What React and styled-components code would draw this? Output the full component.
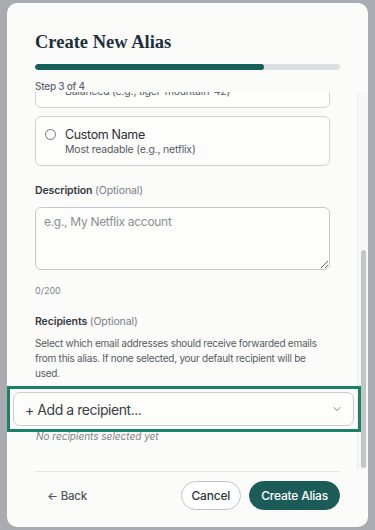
import React from 'react'
import styled, { createGlobalStyle } from 'styled-components'

const GlobalStyle = createGlobalStyle`
  html, body {
    margin: 0;
    padding: 0;
    background: #a8abb0;
  }
  body {
    font-family: Inter, "Noto Sans", sans-serif;
    -webkit-font-smoothing: antialiased;
  }
`

const Page = styled.div`
  padding: 3px 7px;
  height: 530px;
  box-sizing: border-box;
`

const Modal = styled.div`
  width: 361px;
  height: 524px;
  background: #fbfbfa;
  border-radius: 10px;
  display: flex;
  flex-direction: column;
  overflow: hidden;
`

const Header = styled.div`
  padding: 27px 28px 0;
`

const Title = styled.h1`
  margin: 0;
  font-family: "Liberation Serif", "DejaVu Serif", serif;
  font-weight: 700;
  font-size: 18.5px;
  line-height: 24px;
  color: #22303a;
`

const Track = styled.div`
  margin-top: 10px;
  height: 6px;
  border-radius: 3px;
  background: #dcdfe1;
  overflow: hidden;
`

const Fill = styled.div`
  height: 100%;
  background: #175f59;
  border-radius: 3px;
`

const StepText = styled.div`
  margin-top: 11px;
  font-size: 10px;
  line-height: 11px;
  font-weight: 500;
  letter-spacing: -0.25px;
  color: #5f6670;
`

const Viewport = styled.div`
  position: relative;
  flex: 1;
  overflow: hidden;
`

const Content = styled.div`
  margin-top: -34px;
  padding: 0 38px 0 28px;
`

const ScrollTrack = styled.div`
  position: absolute;
  top: 1px;
  bottom: 1px;
  right: 0;
  width: 10px;
  border-left: 1px solid #ebebea;
  background: #f7f7f6;
`

const ScrollThumb = styled.div`
  position: absolute;
  top: 157px;
  height: 218px;
  right: 2px;
  width: 5px;
  border-radius: 3px;
  background: #c3c5c7;
`

const Options = styled.div`
  display: flex;
  flex-direction: column;
  gap: 8px;
`

const OptionCard = styled.label`
  display: flex;
  align-items: flex-start;
  gap: 9px;
  padding: 9px 14px 8px 9px;
  border: 1px solid #cfd3d6;
  border-radius: 6px;
  background: #fdfdfc;
`

const Radio = styled.span`
  flex: none;
  margin-top: 3px;
  width: 11px;
  height: 11px;
  box-sizing: border-box;
  border: 1px solid #6c7278;
  border-radius: 50%;
  background: #fff;
`

const OptionTitle = styled.div`
  font-size: 12.5px;
  line-height: 17px;
  letter-spacing: -0.35px;
  color: #2a2f33;
`

const OptionHint = styled.div`
  font-size: 10.5px;
  line-height: 14px;
  letter-spacing: -0.2px;
  color: #555b61;
`

const Label = styled.div`
  margin-top: ${p => p.$top}px;
  font-size: 10.5px;
  line-height: 14px;
  font-weight: 600;
  letter-spacing: -0.1px;
  color: #333a40;
`

const Muted = styled.span`
  font-weight: 400;
  color: #7a8086;
`

const TextArea = styled.textarea`
  display: block;
  width: 100%;
  box-sizing: border-box;
  height: 63px;
  margin-top: 9px;
  padding: 6px 8px;
  border: 1px solid #c5c9cd;
  border-radius: 6px;
  background: #fdfdfc;
  font-family: inherit;
  font-size: 12px;
  line-height: 16px;
  letter-spacing: -0.3px;
  color: #333;
  resize: vertical;
  outline: none;
  &::placeholder {
    color: #8b8f93;
  }
`

const Counter = styled.div`
  margin-top: 15px;
  font-size: 9px;
  line-height: 12px;
  color: #80868b;
`

const Help = styled.p`
  margin: 7px 0 0;
  font-size: 10px;
  line-height: 15px;
  letter-spacing: -0.25px;
  color: #555b61;
`

const Highlight = styled.div`
  position: relative;
  z-index: 1;
  margin: 5px -31px 0 -28px;
  padding: 3px 4px 3px 3px;
  border: 3px solid #1c8068;
`

const Select = styled.button`
  display: flex;
  align-items: center;
  justify-content: space-between;
  width: 100%;
  height: 34px;
  padding: 0 10px 0 11px;
  box-sizing: border-box;
  border: 1px solid #c9cdd0;
  border-radius: 7px;
  background: #fdfdfc;
  font-family: inherit;
  font-size: 14px;
  letter-spacing: -0.45px;
  color: #3a3f44;
  cursor: pointer;
`

const Empty = styled.div`
  margin-top: -2px;
  padding: 0 0 40px 1px;
  font-size: 10px;
  line-height: 13px;
  font-style: italic;
  color: #7d8388;
`

const Footer = styled.div`
  margin: 0 28px;
  height: 56px;
  box-sizing: border-box;
  border-top: 1px solid #e3e4e4;
  display: flex;
  align-items: center;
  padding-bottom: 8px;
`

const BackButton = styled.button`
  border: none;
  background: none;
  padding: 0 12px;
  font-family: inherit;
  font-size: 11.5px;
  font-weight: 500;
  letter-spacing: -0.2px;
  color: #50565c;
  cursor: pointer;
`

const Spacer = styled.div`
  flex: 1;
`

const Pill = styled.button`
  height: 29px;
  padding: 0 ${p => (p.$primary ? 11 : 10)}px;
  margin-left: ${p => (p.$primary ? 8 : 0)}px;
  border-radius: 15px;
  border: 1px solid ${p => (p.$primary ? '#1b5c58' : '#bfc3c6')};
  background: ${p => (p.$primary ? '#1b5c58' : '#fff')};
  color: ${p => (p.$primary ? '#fff' : '#30363b')};
  font-family: inherit;
  font-size: 12px;
  font-weight: 500;
  letter-spacing: -0.2px;
  cursor: pointer;
`

const options = [
  { title: 'Memorable', hint: 'Balanced (e.g., tiger-mountain-42)' },
  { title: 'Custom Name', hint: 'Most readable (e.g., netflix)' },
]

export default function App() {
  return (
    <Page>
      <GlobalStyle />
      <Modal>
        <Header>
          <Title>Create New Alias</Title>
          <Track>
            <Fill style={{ width: `${(3 / 4) * 100}%` }} />
          </Track>
          <StepText>Step 3 of 4</StepText>
        </Header>

        <Viewport>
          <Content>
            <Options>
              {options.map(o => (
                <OptionCard key={o.title}>
                  <Radio />
                  <div>
                    <OptionTitle>{o.title}</OptionTitle>
                    <OptionHint>{o.hint}</OptionHint>
                  </div>
                </OptionCard>
              ))}
            </Options>

            <Label $top={18}>
              Description <Muted>(Optional)</Muted>
            </Label>
            <TextArea placeholder="e.g., My Netflix account" />
            <Counter>0/200</Counter>

            <Label $top={18}>
              Recipients <Muted>(Optional)</Muted>
            </Label>
            <Help>
              Select which email addresses should receive forwarded emails from this alias. If none
              selected, your default recipient will be used.
            </Help>

            <Highlight>
              <Select>
                <span>+ Add a recipient...</span>
                <svg width="12" height="12" viewBox="0 0 24 24" fill="none" stroke="#6b7177" strokeWidth="1.8" strokeLinecap="round" strokeLinejoin="round">
                  <path d="m6 9 6 6 6-6" />
                </svg>
              </Select>
            </Highlight>
            <Empty>No recipients selected yet</Empty>
          </Content>
          <ScrollTrack>
            <ScrollThumb />
          </ScrollTrack>
        </Viewport>

        <Footer>
          <BackButton>← Back</BackButton>
          <Spacer />
          <Pill>Cancel</Pill>
          <Pill $primary>Create Alias</Pill>
        </Footer>
      </Modal>
    </Page>
  )
}
